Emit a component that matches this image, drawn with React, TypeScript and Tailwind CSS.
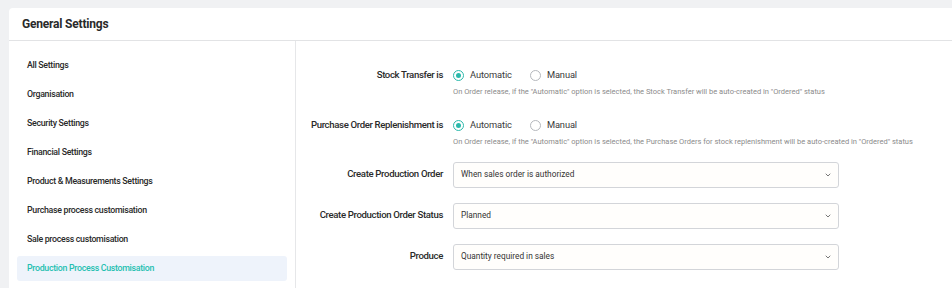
import { ChevronDown } from "lucide-react";

const menu = [
  "All Settings",
  "Organisation",
  "Security Settings",
  "Financial Settings",
  "Product & Measurements Settings",
  "Purchase process customisation",
  "Sale process customisation",
  "Production Process Customisation",
];

const Radio = ({ checked, label }: { checked?: boolean; label: string }) => (
  <label className="flex items-center gap-[6px]">
    {checked ? (
      <span className="flex h-[11px] w-[11px] items-center justify-center rounded-full border border-[#2bb9ab] bg-white">
        <span className="h-[5px] w-[5px] rounded-full bg-[#2bb9ab]" />
      </span>
    ) : (
      <span className="h-[11px] w-[11px] rounded-full border border-[#b5b8bd] bg-white" />
    )}
    <span className="text-[9.3px] tracking-[-0.1px] text-[#3a3a3a]">{label}</span>
  </label>
);

const RadioRow = ({ label, hint }: { label: string; hint: string }) => (
  <div className="flex items-start">
    <div className="w-[147px] whitespace-nowrap pt-[3px] text-right text-[9.6px] font-medium tracking-[-0.35px] text-[#2a2a2a]">
      {label}
    </div>
    <div className="ml-[10px] flex flex-col">
      <div className="flex h-[20px] items-center gap-[18px]">
        <Radio checked label="Automatic" />
        <Radio label="Manual" />
      </div>
      <p className="mt-[1px] whitespace-nowrap text-[7.5px] text-[#8b8b8b]">{hint}</p>
    </div>
  </div>
);

const SelectRow = ({ label, value }: { label: string; value: string }) => (
  <div className="flex items-center">
    <div className="w-[147px] whitespace-nowrap text-right text-[9.6px] font-medium tracking-[-0.35px] text-[#2a2a2a]">
      {label}
    </div>
    <div className="ml-[10px] flex h-[26px] w-[386px] items-center justify-between rounded-[3px] border border-[#d3d5d9] bg-[#fffefc] pl-[7px] pr-[6px]">
      <span className="text-[8.3px] text-[#333]">{value}</span>
      <ChevronDown className="h-[8px] w-[8px] text-[#777]" strokeWidth={3} />
    </div>
  </div>
);

export default function App() {
  return (
    <div
      className="h-[288px] w-[952px] overflow-hidden bg-[#f0f1f3] pl-[9px] pt-[8px]"
      style={{ fontFamily: "Roboto, sans-serif" }}
    >
      <div className="h-full rounded-tl-[4px] bg-white">
        <div className="flex h-[33px] items-center border-b border-[#e2e3e5] pl-[13px]">
          <h1 className="text-[12px] font-bold tracking-[-0.2px] text-[#2a2a2a]">General Settings</h1>
        </div>
        <div className="flex h-full">
          <div className="w-[287px] shrink-0 border-r border-[#e6e7e9] px-[8px] pt-[12px]">
            {menu.map((item, i) => (
              <div
                key={i}
                className={
                  i === menu.length - 1
                    ? "mb-[4px] flex h-[25px] items-center rounded-[3px] bg-[#eef3fb] pl-[10px] text-[8.8px] font-medium tracking-[-0.3px] text-[#25bfb1]"
                    : "mb-[4px] flex h-[25px] items-center pl-[10px] text-[8.8px] font-medium tracking-[-0.3px] text-[#2a2a2a]"
                }
              >
                {item}
              </div>
            ))}
          </div>
          <div className="flex flex-col pt-[24px]">
            <RadioRow
              label="Stock Transfer is"
              hint={'On Order release, if the "Automatic" option is selected, the Stock Transfer will be auto-created in "Ordered" status'}
            />
            <div className="h-[18px]" />
            <RadioRow
              label="Purchase Order Replenishment is"
              hint={'On Order release, if the "Automatic" option is selected, the Purchase Orders for stock replenishment will be auto-created in "Ordered" status'}
            />
            <div className="mt-[14px] flex flex-col gap-[15px]">
              <SelectRow label="Create Production Order" value="When sales order is authorized" />
              <SelectRow label="Create Production Order Status" value="Planned" />
              <SelectRow label="Produce" value="Quantity required in sales" />
            </div>
          </div>
        </div>
      </div>
    </div>
  );
}
